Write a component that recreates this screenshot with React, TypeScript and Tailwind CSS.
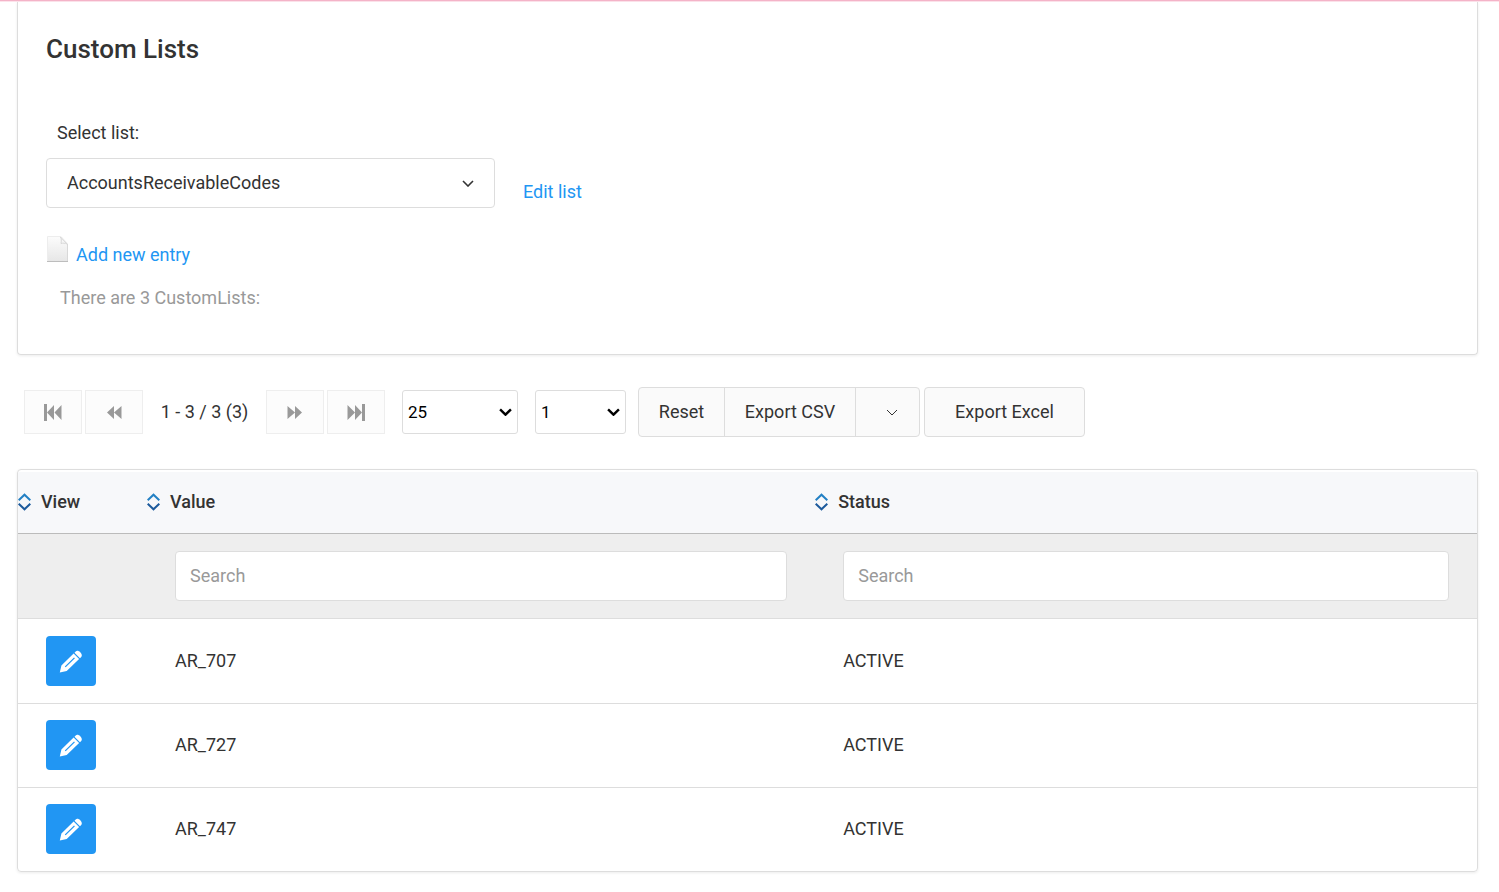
import { useState, type ReactNode } from 'react'

type Entry = { id: number; value: string; status: string }

const ENTRIES: Entry[] = [
  { id: 707, value: 'AR_707', status: 'ACTIVE' },
  { id: 727, value: 'AR_727', status: 'ACTIVE' },
  { id: 747, value: 'AR_747', status: 'ACTIVE' },
]

export default function App() {
  const [valueFilter, setValueFilter] = useState('')
  const [statusFilter, setStatusFilter] = useState('')

  const rows = ENTRIES.filter(
    (e) =>
      e.value.toLowerCase().includes(valueFilter.toLowerCase()) &&
      e.status.toLowerCase().includes(statusFilter.toLowerCase()),
  )

  const reset = () => {
    setValueFilter('')
    setStatusFilter('')
  }

  return (
    <div className="min-h-screen border-t border-[#f4b3c8] bg-white font-[Roboto,sans-serif] text-[18px] leading-6 text-[#333]">
      <main className="border-t border-[#fde3eb] pr-[21px] pb-5 pl-[17px]">
        <section className="rounded-b border border-t-0 border-[#ddd] px-7 pt-8 pb-11 shadow-[0_1px_3px_rgba(0,0,0,0.08)]">
          <h1 className="text-[26px] leading-[30px] font-medium">Custom Lists</h1>

          <label htmlFor="list" className="mt-[57px] block pl-[11px]">
            Select list:
          </label>
          <div className="mt-[13px] flex items-center gap-7">
            <div className="relative w-[449px]">
              <select
                id="list"
                className="h-[50px] w-full appearance-none rounded border border-[#ddd] bg-white pr-10 pl-5"
              >
                <option>AccountsReceivableCodes</option>
              </select>
              <Chevron className="right-[21px] h-[7px] w-3" strokeWidth={1.6} />
            </div>
            <a href="#edit" className="pt-[18px] text-[#2196f3]">
              Edit list
            </a>
          </div>

          <a href="#new" className="mt-7 flex items-start gap-[7px] text-[#2196f3]">
            <PageIcon />
            <span className="pt-[7px]">Add new entry</span>
          </a>
          <p className="mt-[19px] pl-[14px] text-[#999]">There are 3 CustomLists:</p>
        </section>

        <div className="mt-8 flex flex-wrap items-center pl-[7px]">
          <div className="flex gap-[3px]">
            <PagerButton label="First page">
              <path d="M0 0h3v17H0zM10 1v15L3 8.500zM17.500 1v15l-7-7.500z" />
            </PagerButton>
            <PagerButton label="Previous page">
              <path d="M9 2v13L2 8.500zM16.500 2v13L9 8.500z" />
            </PagerButton>
          </div>
          <span className="w-[123px] text-center">1 - 3 / 3 (3)</span>
          <div className="flex gap-[3px]">
            <PagerButton label="Next page">
              <path d="M1.500 2v13L9 8.500zM9 2v13l7-6.500z" />
            </PagerButton>
            <PagerButton label="Last page">
              <path d="M15 0h3v17h-3zM8 1v15l7-7.500zM.5 1v15l7.500-7.500z" />
            </PagerButton>
          </div>

          <div className="relative ml-[17px] w-[116px]">
            <select
              aria-label="Rows per page"
              className="h-11 w-full appearance-none rounded-[3px] border border-[#ddd] bg-white pl-[5px] text-[17px] text-black"
            >
              <option>25</option>
              <option>50</option>
            </select>
            <Chevron className="right-[6px] h-2 w-[13px] text-black" strokeWidth={2.2} />
          </div>
          <div className="relative ml-[17px] w-[91px]">
            <select
              aria-label="Page"
              className="h-11 w-full appearance-none rounded-[3px] border border-[#ddd] bg-white pl-[5px] text-[17px] text-black"
            >
              <option>1</option>
            </select>
            <Chevron className="right-[6px] h-2 w-[13px] text-black" strokeWidth={2.2} />
          </div>

          <div className="ml-3 flex h-[50px] divide-x divide-[#ddd] rounded border border-[#ddd] bg-[#fafafa]">
            <button type="button" onClick={reset} className="w-[86px]">
              Reset
            </button>
            <button type="button" className="w-[131px]">
              Export CSV
            </button>
            <button type="button" aria-label="Export options" className="relative w-[63px]">
              <Chevron className="right-[21px] h-[7px] w-3" strokeWidth={1} />
            </button>
          </div>
          <button
            type="button"
            className="ml-1 h-[50px] w-[161px] rounded border border-[#ddd] bg-[#fafafa]"
          >
            Export Excel
          </button>
        </div>

        <section className="mt-8 rounded border border-[#ddd] pt-[2px] shadow-[0_1px_3px_rgba(0,0,0,0.08)]">
          <table className="w-full table-fixed text-left">
            <thead>
              <tr className="h-[61px] border-b border-[#bbb] bg-[#f7f8fa]">
                <SortHeader className="w-[129px]">View</SortHeader>
                <SortHeader className="w-[45.8%]">Value</SortHeader>
                <SortHeader>Status</SortHeader>
              </tr>
              <tr className="h-[85px] border-b border-[#ddd] bg-[#eee]">
                <td />
                <SearchCell label="Search value" value={valueFilter} onChange={setValueFilter} />
                <SearchCell label="Search status" value={statusFilter} onChange={setStatusFilter} />
              </tr>
            </thead>
            <tbody>
              {rows.map((e) => (
                <tr
                  key={e.id}
                  className="h-[84px] border-b border-[#ddd] first:h-[85px] last:border-b-0"
                >
                  <td className="px-7">
                    <button
                      type="button"
                      aria-label={`Edit ${e.value}`}
                      className="flex size-[50px] items-center justify-center rounded bg-[#2196f3] text-white"
                    >
                      <PencilIcon />
                    </button>
                  </td>
                  <td className="px-7">{e.value}</td>
                  <td className="px-7">{e.status}</td>
                </tr>
              ))}
            </tbody>
          </table>
        </section>
      </main>
    </div>
  )
}

function SortHeader({ className, children }: { className?: string; children: ReactNode }) {
  return (
    <th scope="col" className={className}>
      <button type="button" className="flex items-center gap-[10px] font-medium">
        <svg width="13" height="18" viewBox="0 0 13 18" fill="none" strokeWidth="2">
          <path d="M0.7 7.2 6.5 1.700l5.800 5.500" stroke="#2380c4" />
          <path d="M0.7 10.800l5.800 5.500 5.800-5.500" stroke="#1c5a9c" />
        </svg>
        {children}
      </button>
    </th>
  )
}

function SearchCell({
  label,
  value,
  onChange,
}: {
  label: string
  value: string
  onChange: (v: string) => void
}) {
  return (
    <td className="px-7">
      <input
        type="text"
        aria-label={label}
        placeholder="Search"
        value={value}
        onChange={(e) => onChange(e.target.value)}
        className="block h-[50px] w-full rounded border border-[#ddd] bg-white px-[14px] placeholder:text-[#999]"
      />
    </td>
  )
}

function PagerButton({ label, children }: { label: string; children: ReactNode }) {
  return (
    <button
      type="button"
      aria-label={label}
      className="flex h-11 w-[58px] items-center justify-center border border-[#eee] bg-[#fcfcfc] text-[#999]"
    >
      <svg width="18" height="17" viewBox="0 0 18 17" fill="currentColor">
        {children}
      </svg>
    </button>
  )
}

function Chevron({ className, strokeWidth }: { className: string; strokeWidth: number }) {
  return (
    <svg
      viewBox="0 0 12 7"
      fill="none"
      stroke="currentColor"
      strokeWidth={strokeWidth}
      className={`pointer-events-none absolute inset-y-0 my-auto ${className}`}
    >
      <path d="M1 1l5 5 5-5" />
    </svg>
  )
}

function PageIcon() {
  return (
    <svg width="23" height="27" viewBox="0 0 23 27">
      <defs>
        <linearGradient id="page" x1="0" y1="0" x2="0" y2="1">
          <stop offset="0" stopColor="#fcfcfc" />
          <stop offset="1" stopColor="#e6e6e6" />
        </linearGradient>
      </defs>
      <path d="M1.500 .5H15l6.500 7v18h-20z" fill="url(#page)" stroke="#ededed" />
      <path d="M14.500 1c1 2 1 4 .5 6.500 2-.5 4-.5 6 .5z" fill="#f6f6f6" stroke="#d8d8d8" />
      <path d="M1 25.500h21" stroke="#bdbdbd" />
      <path d="M21.500 8v17" stroke="#d8d8d8" />
    </svg>
  )
}

function PencilIcon() {
  return (
    <svg width="24" height="24" viewBox="0 0 24 24" fill="currentColor">
      <path d="M16.700 2.400c2.200-2.600 8 2.500 5.500 5.600l-1.200 1.300-5.500-5.600z" />
      <path
        fillRule="evenodd"
        d="M14.600 4.500l5.500 5.600L7.700 22 .8 23.600l1.600-7.100zM15 8.400l-9.200 9 .9.900 9.200-9z"
      />
    </svg>
  )
}
